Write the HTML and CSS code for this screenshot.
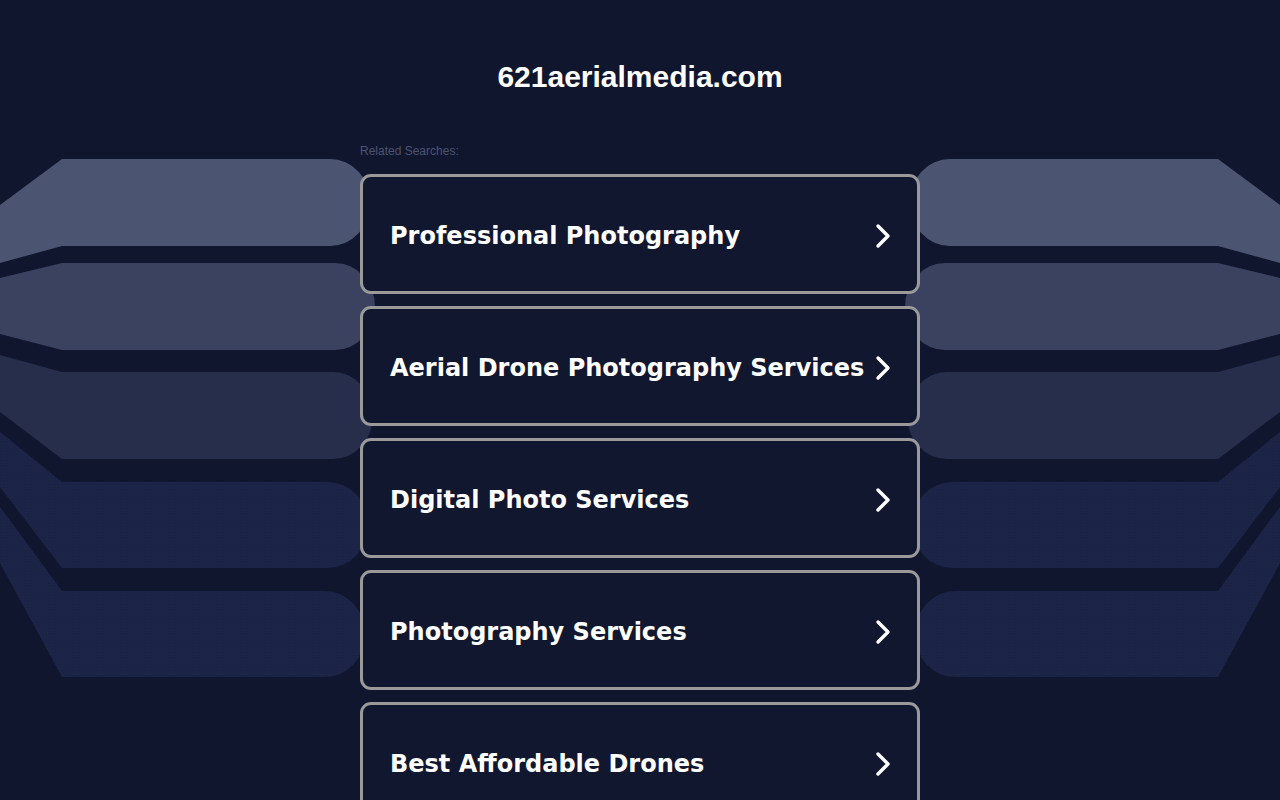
FILE: index.html
```html
<!DOCTYPE html>
<html lang="en">
<head>
<meta charset="utf-8">
<title>621aerialmedia.com</title>
<link rel="stylesheet" href="styles.css">
</head>
<body>
<svg class="backdrop" viewBox="0 0 1280 800" width="1280" height="800" aria-hidden="true">
  <defs>
    <pattern id="dots" width="3" height="3" patternUnits="userSpaceOnUse">
      <rect width="3" height="3" fill="#1c2447"/>
      <circle cx="1" cy="1" r="0.5" fill="#161d3c"/>
    </pattern>
    <g id="half">
      <path d="M0,205 L62,159 L330,159 A40,43 0 0 1 330,246 L62,246 L0,263 Z" fill="#4b5572"/>
      <path d="M0,278 L62,263 L335,263 A40,43.5 0 0 1 335,350 L62,350 L0,334 Z" fill="#3a4260"/>
      <path d="M0,355 L62,372 L333,372 A40,43.5 0 0 1 333,459 L62,459 L0,412 Z" fill="#262e4c"/>
      <path d="M0,432 L62,482 L328,482 A40,43 0 0 1 328,568 L62,568 L0,487 Z" fill="url(#dots)"/>
      <path d="M0,507 L62,591 L325,591 A40,43 0 0 1 325,677 L62,677 L0,563 Z" fill="url(#dots)"/>
    </g>
  </defs>
  <use href="#half"/>
  <use href="#half" transform="translate(1280,0) scale(-1,1)"/>
</svg>
<main class="page">
  <h1 class="domain">621aerialmedia.com</h1>
  <section class="related">
    <p class="related-label">Related Searches:</p>
    <ul class="links">
      <li><a class="link-card" href="#"><span>Professional Photography</span><svg class="chev" viewBox="0 0 16 26"><path d="M3,3 L13,13 L3,23"/></svg></a></li>
      <li><a class="link-card" href="#"><span>Aerial Drone Photography Services</span><svg class="chev" viewBox="0 0 16 26"><path d="M3,3 L13,13 L3,23"/></svg></a></li>
      <li><a class="link-card" href="#"><span>Digital Photo Services</span><svg class="chev" viewBox="0 0 16 26"><path d="M3,3 L13,13 L3,23"/></svg></a></li>
      <li><a class="link-card" href="#"><span>Photography Services</span><svg class="chev" viewBox="0 0 16 26"><path d="M3,3 L13,13 L3,23"/></svg></a></li>
      <li><a class="link-card" href="#"><span>Best Affordable Drones</span><svg class="chev" viewBox="0 0 16 26"><path d="M3,3 L13,13 L3,23"/></svg></a></li>
    </ul>
  </section>
</main>
</body>
</html>
```
FILE: styles.css
```css
html, body {
  margin: 0;
  padding: 0;
  background: #10162d;
  overflow: hidden;
  height: 800px;
}
body {
  position: relative;
  font-family: "Liberation Sans", Arial, sans-serif;
}
.backdrop {
  position: absolute;
  left: 0;
  top: 0;
  z-index: 0;
  display: block;
}
.page {
  position: relative;
  z-index: 1;
  display: flex;
  flex-direction: column;
  align-items: center;
}
.domain {
  margin: 0;
  padding-top: 60px;
  line-height: 34px;
  font-size: 30px;
  font-weight: bold;
  color: #ffffff;
  font-family: "Liberation Sans", Arial, sans-serif;
}
.related {
  width: 560px;
  margin-top: 50px;
}
.related-label {
  margin: 0;
  font-size: 12px;
  line-height: 14px;
  color: #4b5573;
}
.links {
  list-style: none;
  margin: 16px 0 0;
  padding: 0;
  display: flex;
  flex-direction: column;
  gap: 12px;
}
.link-card {
  box-sizing: border-box;
  height: 120px;
  display: flex;
  align-items: center;
  justify-content: space-between;
  padding: 3px 26px 0 27px;
  border: 3px solid #9a9a9a;
  border-radius: 11px;
  background: #11172e;
  color: #ffffff;
  text-decoration: none;
  font-family: "DejaVu Sans", Verdana, sans-serif;
  font-weight: bold;
  font-size: 24px;
  white-space: nowrap;
}
.chev {
  width: 16px;
  height: 26px;
  flex: none;
}
.chev path {
  fill: none;
  stroke: #ffffff;
  stroke-width: 3.4;
  stroke-linecap: round;
  stroke-linejoin: round;
}
```
